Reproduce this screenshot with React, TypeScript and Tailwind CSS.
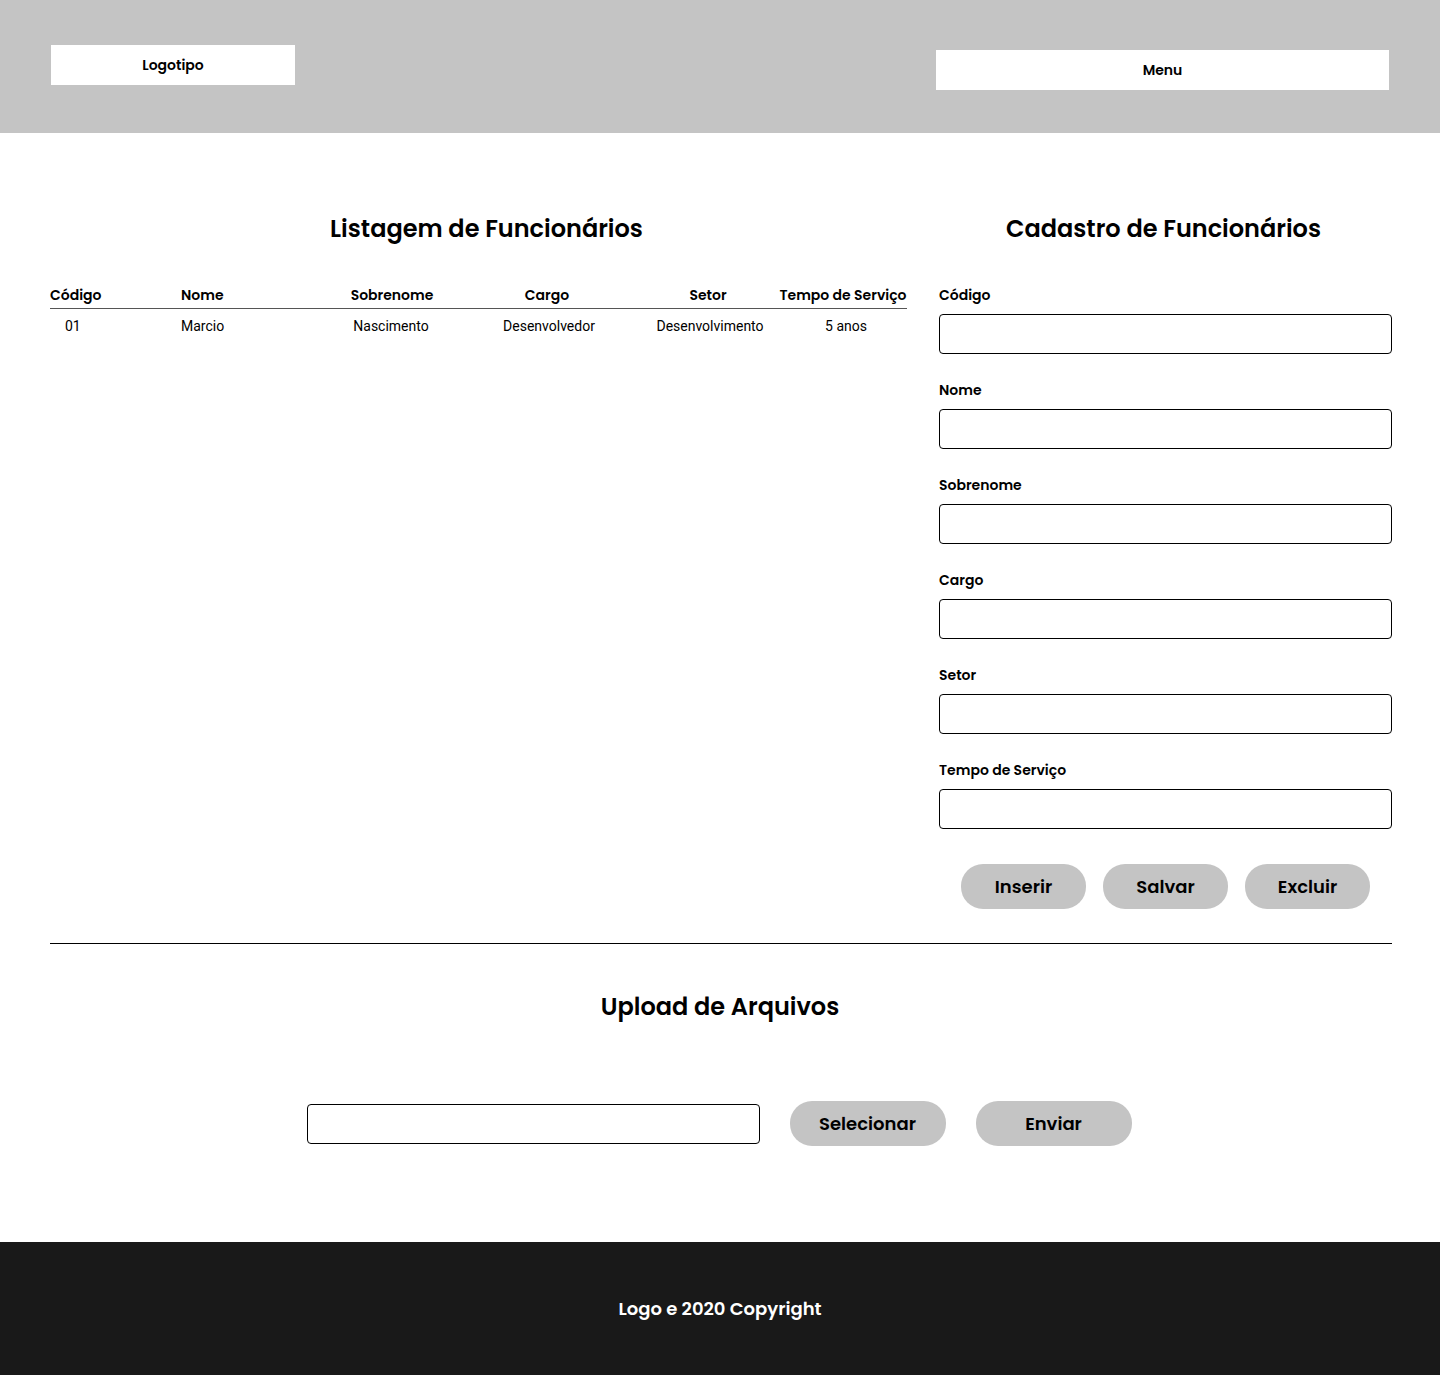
import React from 'react';

const heading = "font-['Poppins','Inter',sans-serif]";

const columns = [
  { label: 'Código', value: '01', cls: 'text-left', valueCls: 'pl-[15px]' },
  { label: 'Nome', value: 'Marcio', cls: 'text-left', valueCls: '' },
  { label: 'Sobrenome', value: 'Nascimento', cls: 'text-center', valueCls: 'pr-[2px]' },
  { label: 'Cargo', value: 'Desenvolvedor', cls: 'text-center', valueCls: 'pl-[4px]' },
  { label: 'Setor', value: 'Desenvolvimento', cls: 'text-center', valueCls: 'pl-[4px]' },
  { label: 'Tempo de Serviço', value: '5 anos', cls: 'text-center', valueCls: 'pl-[6px]' },
];

const fields = ['Código', 'Nome', 'Sobrenome', 'Cargo', 'Setor', 'Tempo de Serviço'];

const PillButton: React.FC<{ label: string; width: string }> = ({ label, width }) => (
  <button
    type="button"
    className={`${width} h-[45px] rounded-[22px] bg-[#c4c4c4] text-[18px] font-semibold text-black`}
  >
    {label}
  </button>
);

export default function App() {
  return (
    <div className={`${heading} min-h-[1375px] bg-white text-black flex flex-col`}>
      {/* Header */}
      <header className="h-[133px] bg-[#c4c4c4] px-[51px] flex justify-between items-start">
        <div className="mt-[45px] w-[244px] h-[40px] bg-white flex items-center justify-center text-[14px] font-semibold">
          Logotipo
        </div>
        <div className="mt-[50px] w-[453px] h-[40px] bg-white flex items-center justify-center text-[14px] font-semibold">
          Menu
        </div>
      </header>

      <main className="flex-1 pl-[50px] pr-[48px] pt-[80px]">
        <div className="flex gap-[32px]">
          {/* Listagem */}
          <section className="w-[857px] shrink-0">
            <h2 className="pl-[16px] text-center text-[24px] leading-[32px] font-semibold">Listagem de Funcionários</h2>
            <div className="mt-[40px]">
              <div className="grid grid-cols-[131px_146px_130px_180px_142px_128px] border-b border-[#555] pb-[3px]">
                {columns.map(c => (
                  <div key={c.label} className={`${c.cls} text-[14px] leading-[20px] font-semibold whitespace-nowrap`}>
                    {c.label}
                  </div>
                ))}
              </div>
              <div className="grid grid-cols-[131px_146px_130px_180px_142px_128px] pt-[7px] font-['Roboto',sans-serif]">
                {columns.map(c => (
                  <div key={c.label} className={`${c.cls} ${c.valueCls} text-[14px] leading-[20px] whitespace-nowrap`}>
                    {c.value}
                  </div>
                ))}
              </div>
            </div>
          </section>

          {/* Cadastro */}
          <section className="w-[453px] shrink-0">
            <h2 className="pr-[4px] text-center text-[24px] leading-[32px] font-semibold">Cadastro de Funcionários</h2>
            <form className="mt-[40px] flex flex-col gap-[26px]">
              {fields.map(f => (
                <div key={f} className="flex flex-col gap-[9px]">
                  <label className="text-[14px] leading-[20px] font-semibold">{f}</label>
                  <input type="text" className="h-[40px] w-full rounded-[4px] border border-black bg-white px-3 outline-none" />
                </div>
              ))}
              <div className="mt-[9px] flex justify-center gap-[17px]">
                <PillButton label="Inserir" width="w-[125px]" />
                <PillButton label="Salvar" width="w-[125px]" />
                <PillButton label="Excluir" width="w-[125px]" />
              </div>
            </form>
          </section>
        </div>

        <hr className="mt-[34px] border-0 border-t border-black" />

        {/* Upload */}
        <section className="pt-[47px] pb-[96px]">
          <h2 className="pr-[2px] text-center text-[24px] leading-[32px] font-semibold">Upload de Arquivos</h2>
          <div className="mt-[78px] pr-[4px] flex items-center justify-center gap-[30px]">
            <input type="text" className="h-[40px] w-[453px] rounded-[4px] border border-black bg-white px-3 outline-none" />
            <PillButton label="Selecionar" width="w-[156px]" />
            <PillButton label="Enviar" width="w-[156px]" />
          </div>
        </section>
      </main>

      <footer className="h-[133px] bg-[#191919] flex items-center justify-center">
        <p className="text-white text-[18px] font-semibold">Logo e 2020 Copyright</p>
      </footer>
    </div>
  );
}
